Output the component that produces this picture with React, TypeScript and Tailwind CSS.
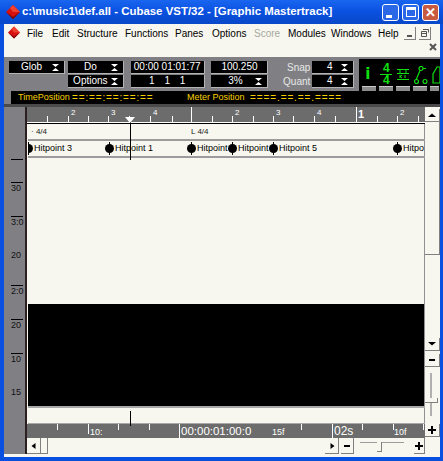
import type { ReactNode } from "react";

const menus = [
  { label: "File", cls: "w-[25px] text-black" },
  { label: "Edit", cls: "w-[25px] text-black" },
  { label: "Structure", cls: "w-[48px] text-black" },
  { label: "Functions", cls: "w-[50px] text-black" },
  { label: "Panes", cls: "w-[37px] text-black" },
  { label: "Options", cls: "w-[42px] text-black" },
  { label: "Score", cls: "w-[34px] text-[#a8a8a0]" },
  { label: "Modules", cls: "w-[43px] text-black" },
  { label: "Windows", cls: "w-[47px] text-black" },
  { label: "Help", cls: "w-[26px] text-black" },
];

const barTicks = [47, 68, 88, 108, 129, 150, 172, 191, 212, 232, 253, 273, 293, 314, 335, 356, 377, 397, 418];
const barLabels = [
  { x: 71, t: "2" },
  { x: 111, t: "3" },
  { x: 153, t: "4" },
  { x: 235, t: "2" },
  { x: 276, t: "3" },
  { x: 317, t: "4" },
  { x: 400, t: "2" },
];
const timeTicks = [57, 88, 118, 149, 301, 362, 393, 423];
const hitpoints = [
  { x: 24, t: "Hitpoint 3" },
  { x: 105, t: "Hitpoint 1" },
  { x: 187, t: "Hitpoint" },
  { x: 228, t: "Hitpoint" },
  { x: 269, t: "Hitpoint 5" },
  { x: 393, t: "Hitpoint" },
];
const scale = ["30", "3:0", "20", "2:0", "20", "10", "15"];

function Diamond({ className }: { className: string }) {
  return (
    <svg viewBox="0 0 14 14" className={className}>
      <polygon points="7,0 14,7 7,14 0,7" fill="#d81010" />
      <polygon points="7,0 14,7 7,7 4,3" fill="#f04030" />
      <polygon points="0,7 7,14 14,7 7,12" fill="#700808" />
    </svg>
  );
}

function Arrows() {
  return (
    <svg viewBox="0 0 7 7" className="absolute right-[5px] top-[3px] h-[7px] w-[7px]">
      <path d="M0 0h7L3.5 3zM0 7h7L3.5 4z" fill="#fff" />
    </svg>
  );
}

// tiny black glyphs on the scroll buttons
function Glyph({ d }: { d: string }) {
  return (
    <svg viewBox="0 0 8 8" className="h-[8px] w-[8px]">
      <path d={d} fill="#000" />
    </svg>
  );
}

const LEFT = "M5.5 1v6L1.5 4z";
const RIGHT = "M2.5 1v6l4-3z";
const UP = "M0 6h8L4 2.5z";
const DOWN = "M0 2h8L4 5.5z";
const MINUS = "M1 3h6v2H1z";
const PLUS = "M3 0h2v3h3v2H5v3H3V5H0V3h3z";

function Field({ children, cls, arrows }: { children?: ReactNode; cls: string; arrows?: boolean }) {
  return (
    <div className={`relative flex h-[13px] items-center justify-center bg-black text-[10px] leading-none text-white border-b border-r border-[#b4b4b4] ${cls}`}>
      {children}
      {arrows && <Arrows />}
    </div>
  );
}

function Btn({ children, cls }: { children?: ReactNode; cls: string }) {
  return (
    <div className={`flex items-center justify-center bg-[#f7f7ef] border-b border-r border-[#808080] ${cls}`}>
      {children}
    </div>
  );
}

function WinBtn({ children, cls }: { children: ReactNode; cls: string }) {
  return (
    <div className={`flex h-[17px] w-[17px] items-center justify-center rounded-[3px] border border-white ${cls}`}>
      {children}
    </div>
  );
}

function Toolbar() {
  return (
    <div className="flex h-[34px] bg-[#808084] pl-[5px] pt-[4px]">
      <div className="flex w-[59px] flex-col gap-[1px]">
        <Field cls="w-[56px] pr-[10px]" arrows>Glob</Field>
      </div>
      <div className="flex w-[63px] flex-col gap-[1px]">
        <Field cls="w-[56px] pr-[10px]" arrows>Do</Field>
        <Field cls="w-[56px] pr-[10px]" arrows>Options</Field>
      </div>
      <div className="flex w-[81px] flex-col gap-[1px]">
        <Field cls="w-[74px]">00:00 01:01:77</Field>
        <Field cls="w-[74px] [word-spacing:7px]">1 1 1</Field>
      </div>
      <div className="flex w-[57px] flex-col gap-[1px]">
        <Field cls="w-[57px]">100.250</Field>
        <Field cls="w-[57px] pr-[8px]" arrows>3%</Field>
      </div>
      <div className="flex w-[44px] flex-col items-end gap-[1px] pr-[2px] text-[10px] leading-[13px] text-[#e8e8e8]">
        <span className="h-[13px]">Snap</span>
        <span className="h-[13px]">Quant</span>
      </div>
      <div className="flex w-[47px] flex-col gap-[1px]">
        <Field cls="w-[42px] pr-[6px]" arrows>4</Field>
        <Field cls="w-[42px] pr-[6px]" arrows>4</Field>
      </div>
      <GreenPanel />
    </div>
  );
}

function GreenPanel() {
  const bars = ["w-[14px]", "w-[14px]", "w-[14px]", "w-[14px]", "w-[9px]"];
  return (
    <div className="relative -mt-[2px] h-[32px] w-[81px] overflow-hidden bg-black">
      <span className="absolute left-[6px] top-[8px] font-['DejaVu_Sans',sans-serif] text-[15px] font-bold leading-[15px] text-[#10e010]">i</span>
      <div className="absolute left-[21px] top-[4px] flex w-[12px] flex-col items-center text-[12px] font-bold leading-[11px] text-[#10e010]">
        <span>4</span>
        <span className="h-[1px] w-[12px] bg-[#10e010]" />
        <span>4</span>
      </div>
      <svg viewBox="0 0 13 13" className="absolute left-[38px] top-[9px] h-[13px] w-[13px]" fill="none" stroke="#10e010" strokeWidth="1">
        <path d="M0 1.5h12M3 1.5v4M9 1.5v4M0 5.5h12M0 11.5h12M3 7v3M5 7l-2 1.5 2 1.5M8 7v3" />
      </svg>
      <svg viewBox="0 0 14 18" className="absolute left-[55px] top-[7px] h-[18px] w-[14px]" fill="none" stroke="#10e010" strokeWidth="1.2">
        <circle cx="7" cy="2.5" r="2" />
        <path d="M9 2.5h3M6 4.5L2 14" />
        <circle cx="2.5" cy="15.5" r="2" />
        <circle cx="11" cy="15.5" r="2" />
      </svg>
      <svg viewBox="0 0 9 18" className="absolute left-[73px] top-[7px] h-[18px] w-[9px]" fill="none" stroke="#10e010" strokeWidth="1.2">
        <path d="M1 17V8L5 1h3v16z" />
      </svg>
      <div className="absolute left-[3px] top-[27px] flex gap-[3px]">
        {bars.map((w, i) => (
          <div key={i} className={`h-[5px] bg-[#8c8c8c] border-t border-[#c8c8c8] ${w}`} />
        ))}
      </div>
    </div>
  );
}

function BarRuler() {
  return (
    <div className="relative h-[15px] overflow-hidden bg-[#6c6c6c] text-[8px] leading-none text-white">
      {barTicks.map((x) => (
        <span key={x} className={`absolute bottom-0 w-[1px] bg-white ${x === 191 || x === 356 ? "h-[15px]" : "h-[6px]"}`} style={{ left: x - 27 }} />
      ))}
      {barLabels.map((l) => (
        <span key={l.x} className="absolute top-[2px]" style={{ left: l.x - 27 }}>{l.t}</span>
      ))}
      <span className="absolute left-[331px] top-[2px] text-[11px] font-bold leading-none">1</span>
    </div>
  );
}

function TimeRuler() {
  return (
    <div className="relative h-[14px] overflow-hidden bg-[#6c6c6c] text-[9px] leading-[14px] text-white">
      {timeTicks.map((x) => (
        <span key={x} className="absolute top-0 h-[6px] w-[1px] bg-white" style={{ left: x - 27 }} />
      ))}
      <span className="absolute left-[61px] top-0 h-[10px] w-[1px] bg-white" />
      <span className="absolute left-[63px] top-[1px]">10:</span>
      <span className="absolute left-[152px] top-0 h-[14px] w-[1px] bg-white" />
      <span className="absolute left-[154px] top-0 text-[11.5px]">00:00:01:00:0</span>
      <span className="absolute left-[245px] top-[1px]">15f</span>
      <span className="absolute left-[305px] top-0 h-[14px] w-[1px] bg-white" />
      <span className="absolute left-[307px] top-0 text-[12px]">02s</span>
      <span className="absolute left-[367px] top-[1px]">10f</span>
    </div>
  );
}

function Marker() {
  return (
    <svg viewBox="0 0 9 13" className="h-[13px] w-[9px] shrink-0">
      <path d="M4 0h1v13H4z" fill="#000" />
      <circle cx="4.5" cy="6.5" r="4.5" fill="#000" />
    </svg>
  );
}

function Track() {
  return (
    <div className="relative flex min-w-0 flex-1 flex-col bg-[#f7f7ef]">
      <BarRuler />
      <div className="h-[1px] bg-white" />
      <div className="h-[1px] bg-black" />
      <div className="ml-[1px] flex flex-col">
        <div className="relative h-[15px] border-r border-[#909090] text-[8px] leading-[15px] text-[#222]">
          <span className="absolute left-[3px]">· 4/4</span>
          <span className="absolute left-[163px]">L 4/4</span>
        </div>
        <div className="h-[2px] bg-[#9c9c9c]" />
        <div className="relative h-[15px] overflow-hidden border-r border-[#909090] text-[9px] leading-[15px] text-black">
          {hitpoints.map((h) => (
            <span key={h.x} className="absolute flex h-[15px] items-center whitespace-nowrap" style={{ left: h.x - 28 }}>
              <Marker />
              <span className="ml-[1px]">{h.t}</span>
            </span>
          ))}
        </div>
        <div className="h-[2px] bg-[#9c9c9c]" />
        <div className="h-[146px] border-r border-[#909090]" />
        <div className="h-[102px] border-r border-[#909090] bg-black" />
        <div className="h-[2px] bg-[#a8a8a8]" />
        <div className="h-[15px] border-r border-[#909090]" />
        <div className="h-[1px] bg-[#a8a8a8]" />
      </div>
      <TimeRuler />
      <Bottom />
      <span className="absolute left-[103px] top-[13px] h-[40px] w-[1px] bg-black" />
      <span className="absolute left-[103px] top-[304px] h-[15px] w-[1px] bg-black" />
      <svg viewBox="0 0 10 6" className="absolute left-[98px] top-[10px] h-[6px] w-[10px]">
        <polygon points="0,0 10,0 5,6" fill="#fff" />
      </svg>
    </div>
  );
}

function Bottom() {
  return (
    <div className="flex h-[17px] items-start">
      <Btn cls="h-[16px] w-[14px]"><Glyph d={LEFT} /></Btn>
      <Btn cls="h-[16px] w-[7px]" />
      <div className="flex-1" />
      <Btn cls="h-[16px] w-[14px]"><Glyph d={RIGHT} /></Btn>
      <Btn cls="ml-[2px] h-[16px] w-[13px]"><Glyph d={MINUS} /></Btn>
      <div className="relative ml-[6px] mt-[4px] h-[2px] w-[44px] border-t border-[#9c9c9c]">
        <span className="absolute left-[17px] -top-[1px] h-[10px] w-[5px] border-b border-r border-[#808080] bg-[#f7f7ef]" />
      </div>
      <Btn cls="ml-[10px] h-[16px] w-[11px]"><Glyph d={PLUS} /></Btn>
    </div>
  );
}

function RightBar() {
  return (
    <div className="flex w-[15px] shrink-0 flex-col bg-[#f7f7ef] pt-[2px]">
      <Btn cls="h-[13px] w-[15px]"><Glyph d={UP} /></Btn>
      <div className="h-[133px] w-[15px] border-b border-r border-[#808080]" />
      <div className="h-[83px]" />
      <Btn cls="h-[13px] w-[15px]"><Glyph d={DOWN} /></Btn>
      <div className="h-[3px]" />
      <Btn cls="h-[13px] w-[15px]"><Glyph d={MINUS} /></Btn>
      <div className="relative h-[57px]">
        <span className="absolute left-[5px] top-[6px] h-[43px] w-[2px] bg-[#b0b0b0]" />
        <span className="absolute left-0 top-[31px] h-[5px] w-[13px] border-b border-r border-[#808080] bg-[#f7f7ef]" />
      </div>
      <Btn cls="h-[13px] w-[15px]"><Glyph d={PLUS} /></Btn>
    </div>
  );
}

function LeftScale() {
  return (
    <div className="mb-[3px] flex w-[21px] shrink-0 flex-col bg-[#808084] pl-[7px] text-[9px] leading-[10px] text-[#111]">
      <div className="h-[53px] w-[12px] border-b border-black" />
      <div className="h-[22px]" />
      {scale.map((s, i) => (
        <div key={i} className="h-[34.2px]">
          <div className={`w-[12px] ${i === 2 || i === 6 ? "" : "border-t border-black"}`}>{s}</div>
        </div>
      ))}
    </div>
  );
}

export default function App() {
  return (
    <div className="h-[461px] w-[443px] overflow-hidden bg-[#0a50e0] font-['Liberation_Sans',sans-serif]">
      <div className="flex h-[24px] items-center bg-gradient-to-b from-[#1a66f0] via-[#0a50e0] to-[#0848c8] pl-[6px] pr-[4px]">
        <Diamond className="h-[14px] w-[14px] shrink-0" />
        <span className="ml-[2px] flex-1 whitespace-nowrap text-[11.45px] font-bold leading-none text-white">
          c:\music1\def.all - Cubase VST/32 - [Graphic Mastertrack]
        </span>
        <div className="flex gap-[3px]">
          <WinBtn cls="bg-[#2a68e8]"><span className="mt-[8px] mr-[4px] h-[3px] w-[6px] bg-white" /></WinBtn>
          <WinBtn cls="bg-[#2a68e8]"><span className="h-[10px] w-[10px] border border-t-[3px] border-white" /></WinBtn>
          <WinBtn cls="bg-[#c85a40] text-[13px] font-bold leading-none text-white">✕</WinBtn>
        </div>
      </div>
      <div className="ml-[4px] mr-[3px] flex h-[433px] flex-col bg-[#f7f7ef]">
        <div className="relative flex h-[33px] items-start pt-[3px]">
          <Diamond className="ml-[4px] mr-[7px] mt-[-1px] h-[13px] w-[12px]" />
          {menus.map((m) => (
            <span key={m.label} className={`text-[10px] leading-[14px] ${m.cls}`}>
              {m.label}
            </span>
          ))}
          <div className="flex gap-[3px]">
            <Btn cls="h-[13px] w-[12px]"><span className="mt-[5px] h-[2px] w-[5px] bg-[#555]" /></Btn>
            <Btn cls="h-[13px] w-[12px]">
              <svg viewBox="0 0 8 8" className="h-[8px] w-[8px]" fill="none" stroke="#555">
                <path d="M2 .5h5.5v3M.5 2.5h5v5h-5zM.5 4.5h5" />
              </svg>
            </Btn>
          </div>
          <svg viewBox="0 0 8 8" className="absolute right-[3px] top-[19px] h-[8px] w-[8px]" fill="none" stroke="#555" strokeWidth="2">
            <path d="M1 1l6 6M7 1L1 7" />
          </svg>
        </div>
        <Toolbar />
        <div className="bg-[#808084] pl-[7px]">
          <div className="flex h-[13px] items-center whitespace-nowrap bg-black pl-[7px] text-[10px] leading-none text-[#f8d000]">
            <span className="w-[54px] shrink-0 text-[9px]">TimePosition</span>
            <span className="w-[115px] shrink-0 tracking-[0.85px]">==:==:==:==:==</span>
            <span className="w-[63px] shrink-0 text-[9px]">Meter Position</span>
            <span className="tracking-[0.9px]">====.==.==.====</span>
          </div>
        </div>
        <div className="flex flex-1 flex-col">
          <div className="h-[3px] bg-[#4a4a4a]" />
          <div className="flex flex-1">
            <LeftScale />
            <div className="mb-[3px] w-[2px] shrink-0 bg-[#2a2020]" />
            <Track />
            <RightBar />
          </div>
        </div>
      </div>
    </div>
  );
}
